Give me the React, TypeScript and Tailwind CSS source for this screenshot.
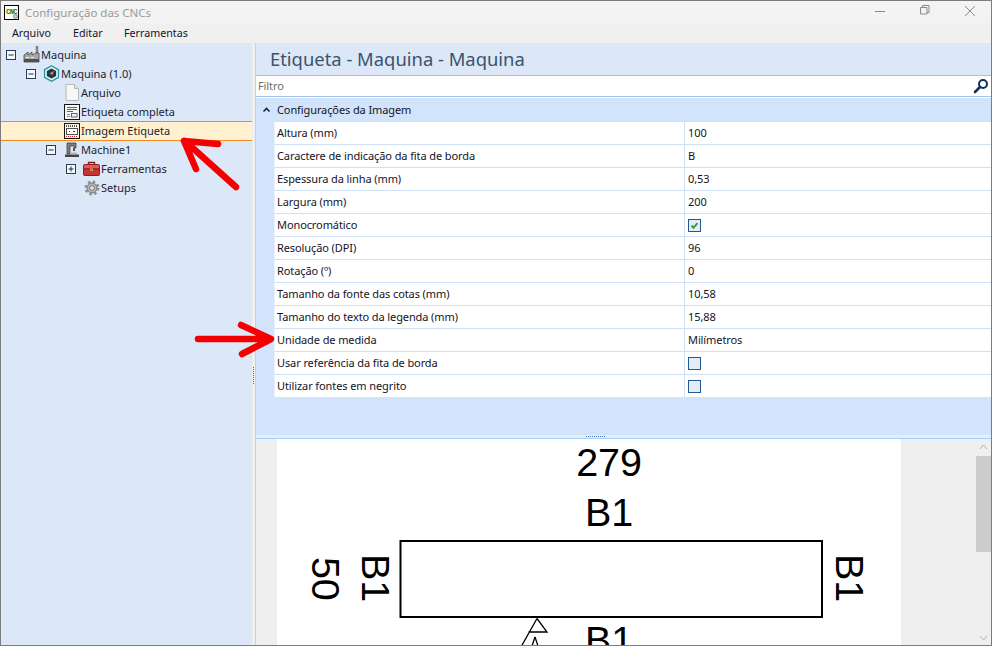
import type { ReactNode } from "react";

const font = { fontFamily: '"Noto Sans", sans-serif' };

/** Little +/- box used by the tree. */
function Toggle({ open }: { open: boolean }) {
  return (
    <svg width="10" height="10" viewBox="0 0 10 10" className="shrink-0">
      <rect x="0.5" y="0.5" width="9" height="9" fill="#f4f7fc" stroke="#2b3a55" />
      <path d="M2.5 5h5" stroke="#1b2a45" />
      {!open && <path d="M5 2.5v5" stroke="#1b2a45" />}
    </svg>
  );
}

function FactoryIcon() {
  return (
    <svg width="17" height="17" viewBox="0 0 17 17">
      <rect x="13" y="0" width="2" height="7" fill="#8f8f8f" stroke="#555" strokeWidth="0.4" />
      <path d="M1 9l4-3v3l4-3v3l4-2h3v9H1z" fill="#a8a8a8" stroke="#444" strokeWidth="0.8" />
      <rect x="1" y="13" width="15" height="3" fill="#4e4e4e" />
      <path d="M3 11.5h3M8 11.5h3" stroke="#ececec" />
    </svg>
  );
}

function CubeIcon() {
  return (
    <svg width="17" height="17" viewBox="0 0 17 17">
      <path d="M8.5 .8l7 3.8v7.8l-7 3.8-7-3.8V4.6z" fill="#d6eef0" stroke="#2b8f9c" strokeWidth="1.2" />
      <path d="M8.5 3.5l4.6 2.5v5l-4.6 2.5L3.9 11V6z" fill="#16384f" />
      <path d="M6 8.5L11 6 9 11 8.5 9z" fill="#f08a1d" />
    </svg>
  );
}

function FileIcon() {
  return (
    <svg width="14" height="17" viewBox="0 0 14 17">
      <path d="M1 .5h8.5L13.5 4.5v12H1z" fill="#f7f7f7" stroke="#b8b8b8" />
      <path d="M9.5.5v4h4" fill="#e2e2e2" stroke="#b8b8b8" />
    </svg>
  );
}

function FullLabelIcon() {
  return (
    <svg width="16" height="16" viewBox="0 0 16 16">
      <rect x="0.5" y="0.5" width="15" height="15" fill="#f6f6f6" stroke="#151515" />
      <path d="M3 3.5h10M3 5.5h10M3 7.5h6" stroke="#666" />
      <rect x="7.5" y="9.5" width="5.5" height="3.5" fill="none" stroke="#666" />
      <path d="M3 10.5h3M3 12.5h3" stroke="#888" />
    </svg>
  );
}

function LabelImageIcon() {
  return (
    <svg width="16" height="16" viewBox="0 0 16 16">
      <rect x="0.5" y="0.5" width="15" height="15" fill="#f8f4ea" stroke="#151515" />
      <path d="M2 3h12" stroke="#222" strokeWidth="1.5" strokeDasharray="1 1" />
      <rect x="2.5" y="5.5" width="11" height="6" fill="#fff" stroke="#555" />
      <path d="M5 8.5h1M9 8.5h2" stroke="#333" />
      <path d="M2 13.5h12" stroke="#d92020" strokeWidth="1.2" strokeDasharray="1 1" />
    </svg>
  );
}

function MachineIcon() {
  return (
    <svg width="16" height="16" viewBox="0 0 16 16">
      <path d="M3 1h9v5h-2V4H6v8H3z" fill="#7f7f7f" stroke="#3a3a3a" strokeWidth="0.7" />
      <rect x="9" y="6" width="2" height="3" fill="#555" />
      <rect x="6" y="10.5" width="7" height="1.5" fill="#b5b5b5" />
      <rect x="1" y="12.5" width="14" height="2.5" fill="#444" />
    </svg>
  );
}

function ToolboxIcon() {
  return (
    <svg width="17" height="15" viewBox="0 0 17 15">
      <path d="M5.5 4V1.5h6V4" fill="none" stroke="#7a2020" strokeWidth="1.4" />
      <rect x="0.5" y="3.5" width="16" height="11" rx="1" fill="#c83232" stroke="#8d1f1f" />
      <rect x="1" y="4" width="15" height="3" fill="#e25a5a" />
      <rect x="7" y="7" width="3" height="2.5" fill="#f0d9a0" />
      <path d="M1 8h15" stroke="#8d1f1f" />
    </svg>
  );
}

function GearIcon() {
  return (
    <svg width="16" height="16" viewBox="0 0 16 16">
      <circle cx="8" cy="8" r="5" fill="#b5b5b5" stroke="#777" />
      <circle
        cx="8"
        cy="8"
        r="6.2"
        fill="none"
        stroke="#8c8c8c"
        strokeWidth="2.6"
        strokeDasharray="2.4 2.47"
      />
      <circle cx="8" cy="8" r="2.4" fill="#e4e4e4" stroke="#777" />
    </svg>
  );
}

function TreeRow({
  indent,
  toggle,
  icon,
  label,
  selected,
}: {
  indent: number;
  toggle?: "open" | "closed";
  icon: ReactNode;
  label: string;
  selected?: boolean;
}) {
  return (
    <div
      className={`flex items-center text-[11px] text-[#1a2433] ${
        selected ? "-mb-px h-[20px] border-y border-[#f28a1c] bg-[#fff0d0]" : "h-[19px]"
      }`}
    >
      <div className="shrink-0" style={{ width: indent }} />
      <div className="flex w-[16px] shrink-0 items-center">
        {toggle && <Toggle open={toggle === "open"} />}
      </div>
      <div className="flex w-[19px] shrink-0 items-center justify-center">{icon}</div>
      <span className={`whitespace-nowrap ${selected ? "" : "pt-[2px]"}`}>{label}</span>
    </div>
  );
}

function Checkbox({ checked }: { checked?: boolean }) {
  return (
    <svg width="13" height="13" viewBox="0 0 13 13">
      <rect x="0.5" y="0.5" width="12" height="12" fill="#e6ecf6" stroke="#1f5a94" />
      {checked && <path d="M3.5 6.5l2 2.2 4-4.5" fill="none" stroke="#3aa335" strokeWidth="2" />}
    </svg>
  );
}

const props: { name: string; value: ReactNode }[] = [
  { name: "Altura (mm)", value: "100" },
  { name: "Caractere de indicação da fita de borda", value: "B" },
  { name: "Espessura da linha (mm)", value: "0,53" },
  { name: "Largura (mm)", value: "200" },
  { name: "Monocromático", value: <Checkbox checked /> },
  { name: "Resolução (DPI)", value: "96" },
  { name: "Rotação (º)", value: "0" },
  { name: "Tamanho da fonte das cotas (mm)", value: "10,58" },
  { name: "Tamanho do texto da legenda (mm)", value: "15,88" },
  { name: "Unidade de medida", value: "Milímetros" },
  { name: "Usar referência da fita de borda", value: <Checkbox /> },
  { name: "Utilizar fontes em negrito", value: <Checkbox /> },
];

/** The rendered label is a picture in the real app, so it's one drawing here too. */
function LabelDrawing() {
  const text = { fontFamily: '"Liberation Sans", sans-serif', fontSize: 39.5 };
  return (
    <svg width="624" height="207" viewBox="277 439 624 207" className="block">
      <rect x="400.5" y="541" width="421.5" height="76" fill="#fff" stroke="#000" strokeWidth="2" />
      <text x="609" y="476" textAnchor="middle" style={text}>279</text>
      <text x="609" y="526" textAnchor="middle" style={text}>B1</text>
      <text x="609" y="654" textAnchor="middle" style={text}>B1</text>
      <text transform="translate(312 557) rotate(90)" style={text}>50</text>
      <text transform="translate(362 554) rotate(90)" style={text}>B1</text>
      <text transform="translate(836 554) rotate(90)" style={text}>B1</text>
      <path d="M537 618.5L521 647M537 618.5L547 632H528.5" fill="none" stroke="#000" strokeWidth="1.3" />
      <path d="M535 637l-3 9M535 637l3 9" fill="none" stroke="#000" strokeWidth="1.3" />
    </svg>
  );
}

export default function App() {
  return (
    <div
      style={font}
      className="relative flex h-[646px] w-[992px] flex-col overflow-hidden border border-[#7c7c7c] bg-[#f0f0f0] text-[11px] tracking-[-0.1px] text-[#14141f]"
    >
      {/* title bar */}
      <div className="flex h-[22px] shrink-0 items-center bg-[#f3f3f3] tracking-normal">
        <div className="relative ml-[3px] flex h-[15px] w-[15px] items-center justify-center border border-black bg-white font-['Liberation_Mono'] text-[7px] font-bold leading-none tracking-[-0.6px] text-[#107a10]">
          CNC
          <span className="absolute bottom-0 right-0 h-[5px] w-[5px] rounded-full border border-[#8a8a8a] bg-[#c9c9c9]" />
        </div>
        <span className="ml-[6px] mt-[1px] text-[11.5px] text-[#9a9a9a]">Configuração das CNCs</span>
        <div className="ml-auto flex items-center">
          <svg width="46" height="22" viewBox="0 0 46 22">
            <path d="M14 10.5h10" stroke="#8a8a8a" />
          </svg>
          <svg width="48" height="22" viewBox="0 0 48 22">
            <path d="M13.5 6.5h6.5v6.5h-6.5z M15.5 6.5V4.5h6.5v7h-2" fill="none" stroke="#8a8a8a" />
          </svg>
          <svg width="36" height="22" viewBox="0 0 36 22">
            <path d="M10 5l10 10M20 5L10 15" stroke="#8a8a8a" />
          </svg>
        </div>
      </div>

      {/* menu */}
      <div className="flex h-[20px] shrink-0 items-center bg-[#f0f0f0] pl-[11px] text-[10.7px] tracking-normal">
        <span className="w-[61px]">Arquivo</span>
        <span className="w-[51px]">Editar</span>
        <span>Ferramentas</span>
      </div>

      <div className="flex min-h-0 flex-1">
        {/* tree */}
        <div className="w-[251px] shrink-0 bg-[#dce8f7] pt-[2px] tracking-normal">
          <TreeRow indent={5} toggle="open" icon={<FactoryIcon />} label="Maquina" />
          <TreeRow indent={25} toggle="open" icon={<CubeIcon />} label="Maquina (1.0)" />
          <TreeRow indent={45} icon={<FileIcon />} label="Arquivo" />
          <TreeRow indent={45} icon={<FullLabelIcon />} label="Etiqueta completa" />
          <TreeRow indent={45} icon={<LabelImageIcon />} label="Imagem Etiqueta" selected />
          <TreeRow indent={45} toggle="open" icon={<MachineIcon />} label="Machine1" />
          <TreeRow indent={65} toggle="closed" icon={<ToolboxIcon />} label="Ferramentas" />
          <TreeRow indent={65} icon={<GearIcon />} label="Setups" />
        </div>

        {/* splitter */}
        <div className="flex w-[3px] shrink-0 items-center justify-center bg-[#f0f0f0] pt-[62px]">
          <div className="h-[17px] w-px border-l border-dotted border-[#4a6fa5]" />
        </div>

        {/* right side */}
        <div className="flex min-w-0 flex-1 flex-col border-l border-[#b9d3f2]">
          <div className="flex h-[32px] shrink-0 items-center bg-[#dce8f7] pl-[14px] text-[18.4px] tracking-normal text-[#3b5370]">
            Etiqueta - Maquina - Maquina
          </div>
          <div className="flex h-[22px] shrink-0 items-center justify-between border-y border-[#a5c4ec] bg-white pl-[2px] pr-[2px] text-[#6d6d6d]">
            <span>Filtro</span>
            <svg width="16" height="16" viewBox="0 0 16 16">
              <circle cx="10" cy="6" r="4" fill="none" stroke="#12305f" strokeWidth="2" />
              <path d="M7 9l-5 5" stroke="#12305f" strokeWidth="2.6" strokeLinecap="round" />
            </svg>
          </div>

          <div className="h-px shrink-0 bg-white" />

          {/* property grid */}
          <div className="h-[337px] shrink-0 bg-[#d2e4fb]">
            <div className="flex h-[23px] items-center">
              <svg width="21" height="22" viewBox="0 0 20 22">
                <path d="M7 12.5l3-3 3 3" fill="none" stroke="#13294b" strokeWidth="1.6" />
              </svg>
              <span className="pt-[2px]">Configurações da Imagem</span>
            </div>
            <div className="ml-[18px] border-l border-[#e9f1fc]">
              {props.map((p) => (
                <div key={p.name} className="flex h-[23px] items-center border-t border-[#cfe0f6] bg-white">
                  <div className="flex h-full w-[410px] shrink-0 items-center border-r border-[#cfe0f6] pl-[2px]">
                    {p.name}
                  </div>
                  <div className="flex items-center pl-[3px]">{p.value}</div>
                </div>
              ))}
            </div>
          </div>

          <div className="relative h-[3px] shrink-0 bg-[#e6eef9]">
            <div className="absolute left-[330px] top-px h-px w-[19px] border-t border-dotted border-[#4a7ac0]" />
          </div>
          <div className="h-px shrink-0 bg-[#a9cff7]" />

          {/* preview */}
          <div className="flex min-h-0 flex-1 bg-[#efefef]">
            <div className="ml-[21px] w-[624px] shrink-0 overflow-hidden bg-white">
              <LabelDrawing />
            </div>
            <div className="ml-auto flex w-[15px] shrink-0 flex-col items-center justify-between py-[4px] text-[#a8a8a8]">
              <svg width="9" height="6" viewBox="0 0 9 6" className="mt-[1px]">
                <path d="M1 5l3.5-4L8 5" fill="none" stroke="#b0b0b0" />
              </svg>
              <div className="absolute bottom-[93px] right-0 h-[96px] w-[15px] bg-[#cdcdcd]" />
              <svg width="9" height="6" viewBox="0 0 9 6">
                <path d="M1 1l3.5 4L8 1" fill="none" stroke="#b0b0b0" />
              </svg>
            </div>
          </div>
        </div>
      </div>

      {/* red annotation arrows */}
      <svg width="992" height="646" viewBox="0 0 992 646" className="pointer-events-none absolute -left-px -top-px">
        <path
          d="M236 187L186 142M184 141L218 144M184 141L196 169"
          fill="none"
          stroke="#f50000"
          strokeWidth="6.5"
          strokeLinecap="round"
          strokeLinejoin="round"
        />
        <path
          d="M198 339H270M241 325L271 339L242 354"
          fill="none"
          stroke="#f50000"
          strokeWidth="6.5"
          strokeLinecap="round"
          strokeLinejoin="round"
        />
      </svg>
    </div>
  );
}
